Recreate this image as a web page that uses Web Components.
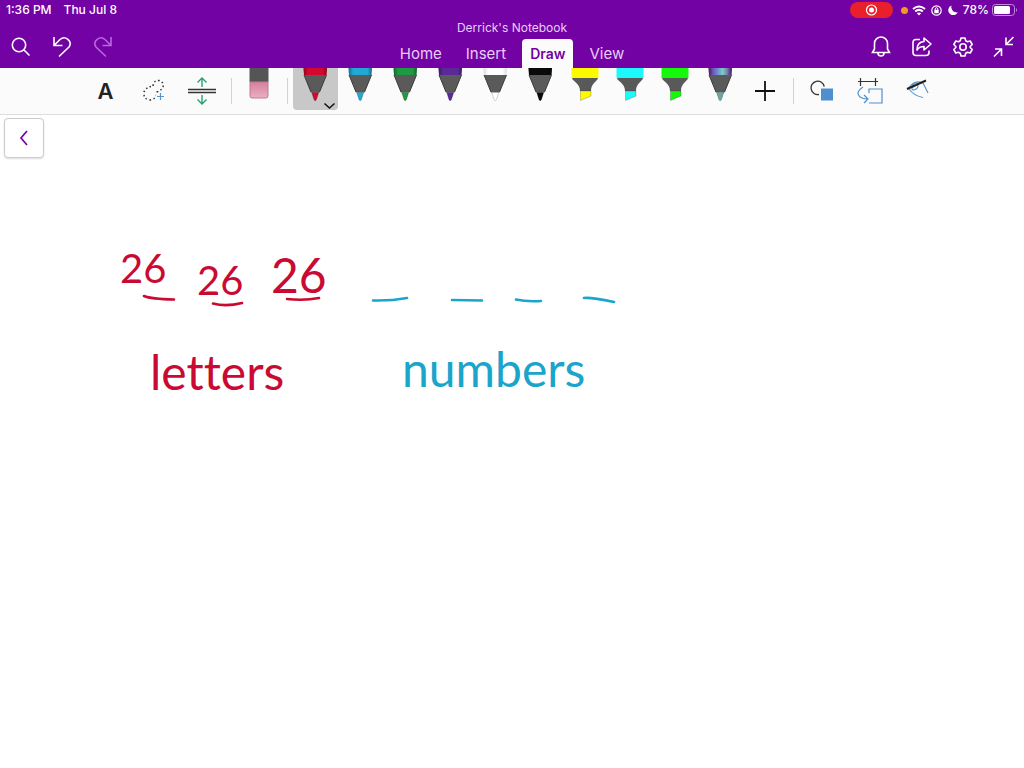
<!DOCTYPE html>
<html lang="en">
<head>
<meta charset="utf-8">
<meta name="viewport" content="width=device-width">
<title>Derrick's Notebook</title>
<style>
html,body{margin:0;min-height:100%;background:#fff}
body{font-family:Inter,"Liberation Sans",sans-serif}
</style>
</head>
<body>
<note-app></note-app>
<script>
const define = (name, html, setup) => customElements.define(name, class extends HTMLElement {
  constructor() {
    super();
    this.attachShadow({mode: 'open'});
  }
  connectedCallback() {
    const t = document.createElement('template');
    t.innerHTML = typeof html === 'function' ? html(this) : html;
    this.shadowRoot.replaceChildren(t.content.cloneNode(true));
    if (setup) setup(this);
  }
});

/* Plain icon button, used in the header */
define('icon-button', el => `
<style>
:host{display:block;width:41px;height:48px}
button{display:flex;align-items:center;justify-content:center;width:100%;height:100%;padding:6px 0 0;border:0;background:none;color:inherit;box-sizing:border-box}
</style>
<button type="button" aria-label="${el.getAttribute('label')}"><slot></slot></button>`);

/* Ribbon tab */
define('ribbon-tab', `
<style>
:host{display:block}
button{height:29px;padding:0 8px;border:0;border-radius:4px 4px 0 0;background:none;color:#e9cdf8;font:400 15px/29px Inter,"Liberation Sans",sans-serif}
:host([selected]) button{background:#fbfbfb;color:#7202a4;font-weight:600;font-size:14px}
</style>
<button type="button"><slot></slot></button>`);

/* Cell of the drawing toolbar */
define('draw-tool', el => `
<style>
:host{display:block;width:48px;height:46px}
:host([narrow]){width:45px}
button{display:flex;align-items:center;justify-content:center;width:100%;height:46px;padding:0;border:0;background:none;color:#222;font:600 22px/46px Inter,"Liberation Sans",sans-serif}
</style>
<button type="button" aria-label="${el.getAttribute('label')}"><slot></slot></button>`);

define('tool-divider', `
<style>:host{display:block;width:1px;height:26px;margin:0 5px;background:#d2d2d2}</style>`);

const shapes = {
  pen: (c, edge) => `<path d="M10.500 0h23.500l-.5 7h-22.500z" fill="${c}"/><path d="M10.500 0h23.500l-.5 7h-22.500z" fill="url(#edge)" opacity="${edge}"/>
    <path d="M11 7h22.500l-7 17.500h-8.500z" fill="#5a5a5a"/><path d="M11 7l7 17M33.500 7l-7 17" stroke="#3d3d3d" stroke-width="1"/>
    <path d="M18.700 24.500h7l-2.200 7q-1.300 2.500-2.600 0z" fill="${c}" stroke="#0004" stroke-width=".7"/>`,
  marker: c => `<path d="M8.500 0h27v10h-27z" fill="${c}"/>
    <path d="M9 10h26c-1 4-7 5-7 13H17c0-8-7-9-8-13z" fill="#595959"/>
    <path d="M17.500 23h10.500v5l-10.500 4.500z" fill="${c}" stroke="#0005" stroke-width=".6"/>`
};
/* Pen or highlighter: <pen-tool color="" kind="pen|marker"> */
define('pen-tool', el => {
  const galaxy = el.getAttribute('color') === 'galaxy';
  const c = galaxy ? 'url(#galaxy)' : el.getAttribute('color');
  return `
<style>
:host{display:block;width:45px;height:46px}
button{display:block;width:100%;height:42px;padding:0;border:0;background:none;border-radius:0 0 4px 4px}
:host([selected]) button{background:#c8c8c8}
svg{display:block}
</style>
<button type="button" aria-label="${el.getAttribute('label')}">
<svg width="45" height="42" fill="none"><defs>
<linearGradient id="edge"><stop stop-opacity=".35"/><stop offset=".2" stop-opacity="0"/><stop offset=".8" stop-opacity="0"/><stop offset="1" stop-opacity=".35"/></linearGradient>
<linearGradient id="galaxy"><stop stop-color="#6b2a9b"/><stop offset=".35" stop-color="#6f7fd0"/><stop offset=".6" stop-color="#7ad0c4"/><stop offset="1" stop-color="#6b2a9b"/></linearGradient></defs>
${shapes[el.getAttribute('kind') || 'pen'](c, c === '#ffffff' ? .4 : 1)}
${galaxy ? '<path d="M18.700 24.500h7l-2.200 7q-1.300 2.500-2.600 0z" fill="#6fa39c"/>' : ''}
${el.hasAttribute('selected') ? '<path d="M31.500 35.500l5 4.500 5-4.500" stroke="#111" stroke-width="1.500"/>' : ''}
</svg></button>`;
});

define('status-bar', `
<style>
:host{display:flex;justify-content:space-between;height:20px;padding:0 7px 0 6px;color:#fff;font-size:12px;font-weight:500;line-height:20px}
div{display:flex;align-items:center}
.time{gap:12px}
.rec{width:43px;height:16px;margin-right:8px}
.dot{width:7px;height:7px;border-radius:50%;background:#f39a1e;margin-right:4px}
.wifi{margin-right:5px}.lock{margin-right:6px}.moon{margin-right:5px}.bat{margin-left:3px}
</style>
<div class="time"><span>1:36 PM</span><span>Thu Jul 8</span></div>
<div>
<svg class="rec" fill="none"><rect width="43" height="16" rx="8" fill="#e9202c"/><circle cx="21.500" cy="8" r="5" stroke="#fff" stroke-width="1.200"/><circle cx="21.500" cy="8" r="2.500" fill="#fff"/></svg>
<span class="dot"></span>
<svg class="wifi" width="14" height="11" fill="none" stroke="#fff" stroke-width="2"><path d="M1 4Q7-1 13 4M3.200 6.500Q7 3.300 10.800 6.500"/><path d="M7 10.500L4.800 8.300Q7 6.700 9.200 8.300z" fill="#fff" stroke="none"/></svg>
<svg class="lock" width="11" height="11" fill="none" stroke="#fff" stroke-width="1.200"><circle cx="5.500" cy="5.500" r="4.700"/><path d="M4.200 5V4a1.300 1.300 0 0 1 2.600 0v1" stroke-width="1"/><path d="M3.300 4.800h4.400v3.400H3.300z" fill="#fff" stroke="none"/></svg>
<svg class="moon" width="10" height="10"><path d="M3.500 0.500A5 5 0 1 0 9.800 7.300A5.500 5.500 0 0 1 3.500 .5z" fill="#fff"/></svg>
<span>78%</span>
<svg class="bat" width="25" height="12" fill="none"><rect x=".5" y=".5" width="22" height="11" rx="3" stroke="#c48be0"/><rect x="2" y="2" width="16" height="8" rx="1.500" fill="#fff"/><path d="M24 4q2 2 0 4z" fill="#c48be0"/></svg>
</div>`);

define('app-header', `
<style>
:host{display:block;background:#7202a4;color:#fff}
.row{display:grid;grid-template-columns:1fr auto 1fr;height:48px}
.side{display:flex}
.end{justify-content:flex-end}
h1{margin:0;font-size:12px;font-weight:400;line-height:15px;height:19px;text-align:center;color:#e9cdf8}
nav{display:flex;gap:8px}
.mid{display:flex;flex-direction:column;justify-content:flex-end}
svg{display:block;fill:none;stroke:#fff;stroke-width:1.600}
</style>
<status-bar></status-bar>
<div class="row">
<div class="side">
<icon-button label="Search"><svg width="20" height="20"><circle cx="8" cy="8" r="6.700"/><path d="M13 13l5.500 5.500"/></svg></icon-button>
<icon-button label="Undo"><svg width="20" height="22"><path d="M2 1v8.500h8.500M2 9.500l6-6C13-1 21 5 17 11L7 20.500"/></svg></icon-button>
<icon-button label="Redo"><svg width="20" height="22" style="stroke:#b867dc"><path d="M18 1v8.500H9.500M18 9.500l-6-6C7-1-1 5 3 11l10 9.500"/></svg></icon-button>
</div>
<div class="mid">
<h1>Derrick's Notebook</h1>
<nav><ribbon-tab>Home</ribbon-tab><ribbon-tab>Insert</ribbon-tab><ribbon-tab selected>Draw</ribbon-tab><ribbon-tab>View</ribbon-tab></nav>
</div>
<div class="side end">
<icon-button label="Notifications"><svg width="20" height="22"><path d="M1.500 16.500h17l-2-3.500V7.500a6.500 6.500 0 0 0-13 0V13zM7 17a3 3 0 0 0 6 0"/></svg></icon-button>
<icon-button label="Share"><svg width="22" height="22"><path d="M9 3.500H5Q2 3.500 2 6.500v10q0 3 3 3h10q3 0 3-3v-2M13 2l7 6-7 6v-3.500q-5 0-7 3.500 0-8 7-8.500z" stroke-linejoin="round"/></svg></icon-button>
<icon-button label="Settings"><svg width="22" height="22" stroke-linejoin="round"><circle cx="11" cy="11" r="3.200"/><path d="M9 2h4l.7 2.800 1.800 1 2.700-.8 2 3.500-2 2v1l2 2-2 3.500-2.700-.8-1.800 1L13 20H9l-.7-2.800-1.800-1-2.700.8-2-3.500 2-2v-1l-2-2L3.800 5l2.700.8 1.800-1z"/></svg></icon-button>
<icon-button label="Exit full screen"><svg width="22" height="22"><path d="M20.500 1L13 8.500M13 1.500v7h7M1 20.500L8.500 13M2 13h6.500v7"/></svg></icon-button>
</div>
</div>`);

define('draw-toolbar', `
<style>
:host{display:flex;justify-content:center;align-items:center;height:46px;background:#fbfbfb;border-bottom:1px solid #dedede}
svg{display:block;fill:none}
.eraser{width:45px;height:46px}
</style>
<draw-tool label="Text">A</draw-tool>
<draw-tool label="Lasso select"><svg width="24" height="24"><path d="M11 7Q12 1 17 1.500Q22 3 21 8Q19 12 15 13Q15 20 8 21Q1 20 2 13Q4 8 11 7z" stroke="#333" stroke-width="1.500" stroke-dasharray="1.500 2.500"/><path d="M18.500 13v9M14 17.500h9" stroke="#fbfbfb" stroke-width="4"/><path d="M18.500 14v7M15 17.500h7" stroke="#5b93cc" stroke-width="1.200"/></svg></draw-tool>
<draw-tool label="Insert space"><svg width="28" height="28" stroke-width="1.400"><path d="M0 12.500h28M0 15.500h28" stroke="#333"/><path d="M14 10V1M9.500 5.500L14 1l4.500 4.500M14 18v9M9.500 22.500L14 27l4.500-4.500" stroke="#2aa06e"/></svg></draw-tool>
<tool-divider></tool-divider>
<draw-tool narrow label="Eraser"><svg class="eraser"><defs><linearGradient id="pink" x2="0" y2="1"><stop stop-color="#d67f9c"/><stop offset="1" stop-color="#e8b0c3"/></linearGradient></defs><path d="M12.500 0h19v14h-19z" fill="#555"/><path d="M13 14h18v14q0 2-2 2h-14q-2 0-2-2z" fill="url(#pink)" stroke="#bd7d93"/></svg></draw-tool>
<tool-divider></tool-divider>
<pen-tool label="Red pen" color="#d4082f" selected></pen-tool>
<pen-tool label="Blue pen" color="#22a8d4"></pen-tool>
<pen-tool label="Green pen" color="#1e9a42"></pen-tool>
<pen-tool label="Purple pen" color="#5b2a96"></pen-tool>
<pen-tool label="White pen" color="#ffffff"></pen-tool>
<pen-tool label="Black pen" color="#0a0a0a"></pen-tool>
<pen-tool label="Yellow highlighter" kind="marker" color="#fdfa00"></pen-tool>
<pen-tool label="Cyan highlighter" kind="marker" color="#1df8fb"></pen-tool>
<pen-tool label="Green highlighter" kind="marker" color="#15f80a"></pen-tool>
<pen-tool label="Galaxy pen" color="galaxy"></pen-tool>
<draw-tool narrow label="Add pen"><svg width="20" height="20"><path d="M10 0v20M0 10h20" stroke="#111" stroke-width="1.800"/></svg></draw-tool>
<tool-divider></tool-divider>
<draw-tool label="Ink to shape"><svg width="26" height="22"><path d="M9 14.500A6.700 6.700 0 1 1 14.300 6.500" stroke="#333" stroke-width="1.300"/><path d="M11 8.500h12v12H11z" fill="#4e8fd0"/></svg></draw-tool>
<draw-tool label="Rotate and resize"><svg width="28" height="26" stroke-width="1.200"><path d="M1 3.500h20M3.500 0v8M18.500 0v8" stroke="#333"/><path d="M12 15v-4h13v14H12M6 9Q-2 14 3 19Q6 21 10 21M7 17l4 4-4 4" stroke="#4e8fd0"/></svg></draw-tool>
<draw-tool label="Ink to text"><svg width="26" height="24"><path d="M3 9Q8 0 17 4Q19 8 22 14M3 10Q8 17 17 18.500M6 9Q7 3 11 4Q14 10 7 11Q4 9 9 7" stroke="#5a97cf" stroke-width="1.200"/><path d="M1 10L20 1.500" stroke="#222" stroke-width="2"/></svg></draw-tool>`);

define('ink-canvas', `
<style>
:host{display:block}
svg{display:block;width:100%;height:480px;fill:none;stroke-width:2.600;stroke-linecap:round;overflow:visible}
text{font-family:Lato,"Open Sans",sans-serif;font-weight:400;font-size:40px;stroke:none;font-variant-ligatures:none}
.large{font-size:48px}
.red{stroke:#c90a32}.red text{fill:#c90a32}
.blue{stroke:#1ba5cb}.blue text{fill:#1ba5cb}
</style>
<svg role="img" aria-label="Handwritten notes">
<g class="red">
<text x="120" y="168">26</text><text x="197" y="180">26</text><text class="large" x="271" y="178">26</text>
<path d="M144 181Q151 184 174 184.500M213 188.500Q226 192 242 188M287 184Q304 186 319 183"/>
<text class="large" x="150" y="275">letters</text>
</g>
<g class="blue">
<path d="M373 185.500Q391 186 407 183M452 185Q467 185 482 185.500M516 184.500Q527 187 541 186M584 183Q590 182 614 187"/>
<text class="large" x="402" y="272">numbers</text>
</g>
</svg>`);

define('note-page', `
<style>
:host{display:block;padding:0 4px}
main{display:grid;grid-template-columns:100%}
button,ink-canvas{grid-area:1/1}
button{z-index:1;display:flex;align-items:center;justify-content:center;width:40px;height:40px;margin-top:3px;padding:0;border:1px solid #ccc;border-radius:4px;background:#fff;box-shadow:0 1px 2px #0002}
ink-canvas{margin:0 -4px}
</style>
<main>
<button type="button" aria-label="Back"><svg width="10" height="16" fill="none"><path d="M8 1L2 8l6 7" stroke="#7202a4" stroke-width="1.700"/></svg></button>
<ink-canvas></ink-canvas>
</main>`);

define('note-app', `
<style>:host{display:block}</style>
<app-header></app-header>
<draw-toolbar role="toolbar" aria-label="Draw"></draw-toolbar>
<note-page></note-page>`);
</script>
</body>
</html>
